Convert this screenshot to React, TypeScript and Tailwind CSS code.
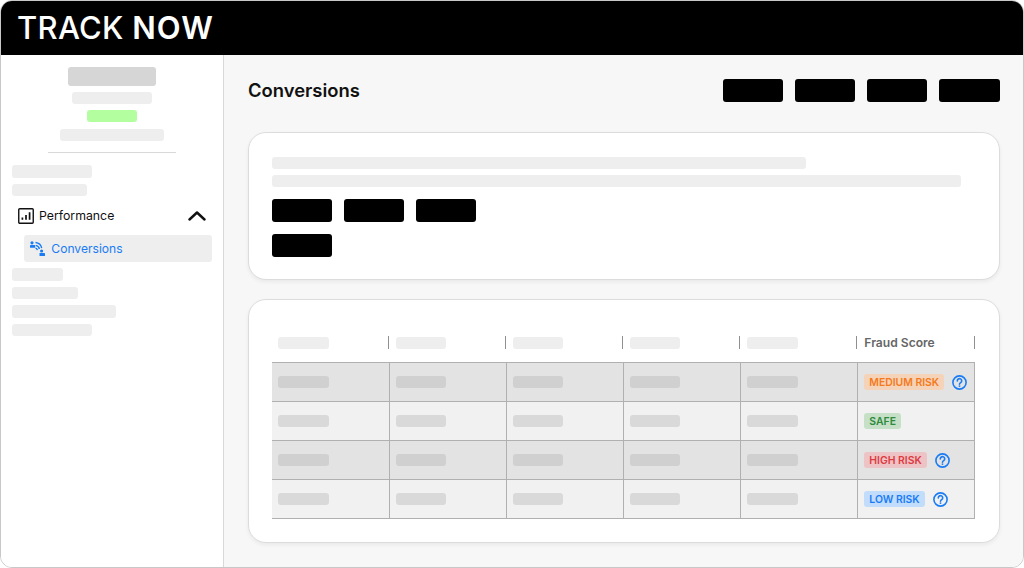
const font = "font-['Inter',sans-serif]";

function Bar({ w, h = "h-[12.4px]", c = "bg-[#eeeeee]" }: { w: string; h?: string; c?: string }) {
  return <div className={`${w} ${h} ${c} rounded-[3px]`} />;
}

function Btn() {
  return <div className="w-[60px] h-[22.6px] bg-black rounded-[3px]" />;
}

function Help() {
  return (
    <svg width="15" height="15" viewBox="0 0 15 15" fill="none" className="shrink-0 mt-px">
      <circle cx="7.5" cy="7.5" r="6.6" stroke="#1a7cf5" strokeWidth="1.6" />
      <path d="M5.3 5.9a2.2 2.2 0 1 1 3.4 1.8c-.8.5-1.2.9-1.2 1.6" stroke="#1a7cf5" strokeWidth="1.6" strokeLinecap="round" fill="none" />
      <circle cx="7.5" cy="11.1" r=".95" fill="#1a7cf5" />
    </svg>
  );
}

function Badge({ label, cls }: { label: string; cls: string }) {
  return (
    <span className={`h-[16.6px] px-[5px] rounded-[3px] text-[10.4px] leading-[17px] font-semibold ${cls}`}>{label}</span>
  );
}

const rows = [
  { bg: "bg-[#e3e3e3]", bar: "bg-[#d0d0d0]", label: "MEDIUM RISK", cls: "bg-[#f5d3b8] text-[#f47a1c]", help: true },
  { bg: "bg-[#f1f1f1]", bar: "bg-[#d9d9d9]", label: "SAFE", cls: "bg-[#c6e0c8] text-[#2f8a3c]", help: false },
  { bg: "bg-[#e3e3e3]", bar: "bg-[#d0d0d0]", label: "HIGH RISK", cls: "bg-[#eec3c5] text-[#dc3c42]", help: true },
  { bg: "bg-[#f1f1f1]", bar: "bg-[#d9d9d9]", label: "LOW RISK", cls: "bg-[#c2dcfb] text-[#1a7cf5]", help: true },
];

export default function App() {
  return (
    <div className={`w-[1024px] h-[568px] overflow-hidden bg-white ${font}`}>
      <div className="w-full h-full flex flex-col rounded-[12px] overflow-hidden border border-[#c8c8c8] bg-white">
        <header className="h-[54px] shrink-0 bg-black flex items-center pl-[16px] pb-[2px]">
          <span className="text-white text-[31px] leading-none font-medium tracking-[0.3px]">
            TRACK <span className="font-semibold tracking-[1px]">NOW</span>
          </span>
        </header>
        <div className="flex-1 flex min-h-0">
          <aside className="w-[222.6px] shrink-0 border-r border-[#d8d8d8] bg-white flex flex-col">
            <div className="flex flex-col items-center pt-[12.3px] mx-[46.5px] h-[97.8px] border-b border-[#d9d9d9]">
              <Bar w="w-[87.7px]" h="h-[18.5px]" c="bg-[#d6d6d6]" />
              <div className="mt-[6.2px]"><Bar w="w-[80px]" /></div>
              <div className="mt-[5.6px]"><Bar w="w-[50.5px]" c="bg-[#b3ff9f]" /></div>
              <div className="mt-[6.4px]"><Bar w="w-[104px]" /></div>
            </div>
            <div className="pl-[11.3px] pt-[12.6px] flex flex-col gap-[6.2px]">
              <Bar w="w-[79.5px]" />
              <Bar w="w-[74.5px]" />
            </div>
            <div className="h-[25px] mt-[7px] pl-[17px] pr-[17px] flex items-center justify-between">
              <div className="flex items-center gap-[5px]">
                <svg width="16" height="16" viewBox="0 0 16 16" fill="none">
                  <rect x=".75" y=".75" width="14.5" height="14.5" rx="1" stroke="#111" strokeWidth="1.4" />
                  <path d="M4.4 11.8V9.6M8 11.8V7M11.6 11.8V4.2" stroke="#111" strokeWidth="1.7" />
                </svg>
                <span className="text-[12.3px] text-[#111]">Performance</span>
              </div>
              <svg width="18" height="10" viewBox="0 0 18 10" fill="none">
                <path d="M1.5 8.5 9 1.5 16.5 8.5" stroke="#111" strokeWidth="2.4" strokeLinecap="round" strokeLinejoin="round" />
              </svg>
            </div>
            <div className="ml-[23.3px] mr-[11px] mt-[7px] h-[27px] shrink-0 rounded-[3px] bg-[#eeeeee] flex items-center pl-[6px] gap-[6px]">
              <svg width="15" height="15" viewBox="0 0 15 15" fill="none">
                <circle cx="2" cy="1.8" r="1.6" fill="#1a7cf5" />
                <rect x="0" y="4" width="5.2" height="2.8" rx=".6" fill="#1a7cf5" />
                <path d="M5.5 1.5c3.4.4 5.6 2.6 6.2 5.6M5.8 4.4c2 .4 3.2 1.6 3.6 3.6M5.5 7.2c1.1.2 1.6.8 1.9 2" stroke="#1a7cf5" strokeWidth="1.35" />
                <circle cx="11.6" cy="10" r="1.6" fill="#1a7cf5" />
                <rect x="9.5" y="12" width="5.5" height="3" rx=".6" fill="#1a7cf5" />
              </svg>
              <span className="text-[12.1px] text-[#1a7cf5]">Conversions</span>
            </div>
            <div className="pl-[11.3px] pt-[6px] flex flex-col gap-[6.1px]">
              <Bar w="w-[50.5px]" />
              <Bar w="w-[65.7px]" />
              <Bar w="w-[104px]" />
              <Bar w="w-[79.5px]" />
            </div>
          </aside>
          <main className="flex-1 bg-[#f7f7f7] pl-[24.4px] pr-[23.5px] min-w-0">
            <div className="flex items-center justify-between h-[77.3px] pb-[6px]">
              <h1 className="text-[18.4px] font-semibold text-[#111]">Conversions</h1>
              <div className="flex gap-3"><Btn /><Btn /><Btn /><div className="w-[60.5px] h-[22.6px] bg-black rounded-[3px]" /></div>
            </div>
            <section className="h-[148px] bg-white border border-[#dcdcdc] rounded-[18px] shadow-[0_2px_4px_rgba(0,0,0,0.06)] pl-[23.4px] pt-[23.4px]">
              <div className="flex flex-col gap-[6px]">
                <Bar w="w-[534px]" />
                <Bar w="w-[689px]" />
              </div>
              <div className="flex gap-3 mt-[11.6px]"><Btn /><Btn /><Btn /></div>
              <div className="mt-[12.4px]"><Btn /></div>
            </section>
            <section className="mt-[19px] h-[243.4px] bg-white border border-[#dcdcdc] rounded-[18px] shadow-[0_2px_4px_rgba(0,0,0,0.06)] pl-[23.4px] pr-[23.5px] pt-[32.7px]">
              <div className="grid grid-cols-[117.2px_117.2px_117.2px_117.2px_117.2px_1fr] h-[20px] items-center">
                {[0, 1, 2, 3, 4].map((i) => (
                  <div key={i} className="pl-[6px] h-[15px] flex items-center">
                    <Bar w="w-[50.5px]" />
                    <div className="ml-auto mr-px w-px h-[13px] bg-[#8f8f8f]" />
                  </div>
                ))}
                <div className="h-[15px] flex items-center pl-[6px]">
                  <span className="text-[12.1px] leading-none font-semibold text-[#666]">Fraud Score</span>
                  <div className="ml-auto w-px h-[13px] bg-[#8f8f8f]" />
                </div>
              </div>
              <div className="mt-[9px] border-b border-r border-[#b0b0b0]">
                {rows.map((r) => (
                  <div key={r.label} className={`${r.bg} border-t border-[#b0b0b0] h-[39px] grid grid-cols-[117.2px_117.2px_117.2px_117.2px_117.2px_1fr]`}>
                    {[0, 1, 2, 3, 4].map((i) => (
                      <div key={i} className="border-r border-[#b0b0b0] pl-[6px] flex items-center">
                        <Bar w="w-[50.5px]" c={r.bar} />
                      </div>
                    ))}
                    <div className="flex items-center pl-[6px] gap-[8px]">
                      <Badge label={r.label} cls={r.cls} />
                      {r.help && <Help />}
                    </div>
                  </div>
                ))}
              </div>
            </section>
          </main>
        </div>
      </div>
    </div>
  );
}
